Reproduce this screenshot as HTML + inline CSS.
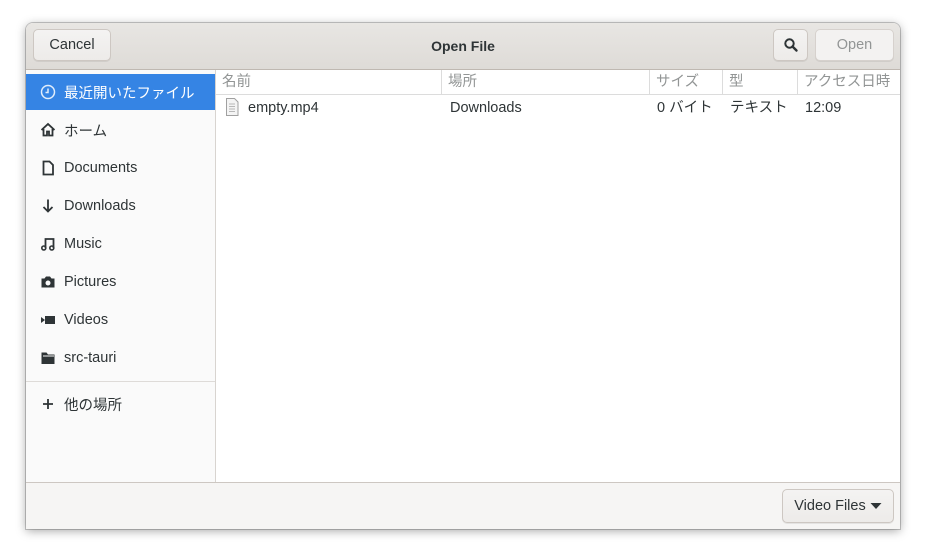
<!DOCTYPE html>
<html><head><meta charset="utf-8"><style>
body{margin:0;width:926px;height:558px;background:#fff;position:relative;font-family:"Liberation Sans","Noto Sans CJK JP",sans-serif;font-size:14.5px;color:#2e3436;overflow:hidden}
.win{position:absolute;left:26px;top:23px;width:874px;height:506px;background:#fff;border-radius:7px 7px 0 0;box-shadow:0 2px 10px rgba(0,0,0,.35),0 0 0 1px rgba(0,0,0,.2);overflow:hidden}
.hb{position:absolute;left:0;top:0;width:874px;height:46px;background:linear-gradient(#e8e6e3,#dedbd7);border-bottom:1px solid #bfb8b1}
.btn{position:absolute;top:6px;height:32px;border:1px solid #cdc7c2;border-radius:5px;background:linear-gradient(#f4f3f2,#edebe9);box-sizing:border-box;display:flex;align-items:center;justify-content:center;box-shadow:0 1px rgba(0,0,0,.07)}
.title{position:absolute;left:0;width:874px;top:15px;text-align:center;font-weight:bold;font-size:14px}
.side{position:absolute;left:0;top:47px;width:189px;height:412px;background:#fafafa;border-right:1px solid #d8d4d0}
.row{position:absolute;left:0;width:189px;height:36px;display:flex;align-items:center}
.row svg{position:absolute;left:14px}
.row span{position:absolute;left:38px}
.sel{background:#3584e4;color:#fff}
.hdr{position:absolute;top:47px;height:24px;border-bottom:1px solid #dcdcdc;color:#929595;font-size:14.5px;line-height:24px;left:190px;width:684px}
.hdr div{position:absolute;top:0;height:24px;border-right:1px solid #dcdcdc;padding-left:6px;box-sizing:border-box}
.cell{position:absolute;top:76px;line-height:18px}
.bot{position:absolute;left:0;top:459px;width:874px;height:47px;background:#f6f5f4;border-top:1px solid #cdc7c2}
</style></head><body>
<div class="win">
 <div class="hb">
  <div class="btn" style="left:7px;width:78px">Cancel</div>
  <div class="title">Open File</div>
  <div class="btn" style="left:747px;width:35px"><svg width="16" height="16" viewBox="0 0 16 16"><circle cx="6.5" cy="6.5" r="4.2" fill="none" stroke="#2e3436" stroke-width="2"/><path d="M9.5 9.5L13.5 13.5" stroke="#2e3436" stroke-width="2.4" stroke-linecap="round"/></svg></div>
  <div class="btn" style="left:789px;width:79px;color:#929595;background:#f3f2f1;border-color:#d6d1cd">Open</div>
 </div>
 <div class="side">
  <div class="row sel" style="top:4px"><svg width="16" height="16" viewBox="0 0 16 16"><circle cx="8" cy="8" r="6.5" fill="none" stroke="#fff" stroke-width="1.5" opacity=".85"/><path d="M8 4.5V8.5H5.5" fill="none" stroke="#fff" stroke-width="1.5" opacity=".85"/></svg><span>最近開いたファイル</span></div>
  <div class="row" style="top:42px"><svg width="16" height="16" viewBox="0 0 16 16"><path d="M1.5 8L8 2l6.5 6M3.5 7v6.5h3.5v-4h2v4h3.5V7" fill="none" stroke="#2e3436" stroke-width="1.8"/></svg><span>ホーム</span></div>
  <div class="row" style="top:80px"><svg width="16" height="16" viewBox="0 0 16 16"><path d="M3.5 1.5h6l3.5 3.5v9.5h-9.5z" fill="none" stroke="#2e3436" stroke-width="1.8"/></svg><span>Documents</span></div>
  <div class="row" style="top:118px"><svg width="16" height="16" viewBox="0 0 16 16"><path d="M8 1.5v12M3.5 9l4.5 4.5 4.5-4.5" fill="none" stroke="#2e3436" stroke-width="1.8"/></svg><span>Downloads</span></div>
  <div class="row" style="top:156px"><svg width="16" height="16" viewBox="0 0 16 16"><path d="M5.5 12V3h8v9" fill="none" stroke="#2e3436" stroke-width="1.8"/><circle cx="3.8" cy="12" r="2" fill="none" stroke="#2e3436" stroke-width="1.6"/><circle cx="11.8" cy="12" r="2" fill="none" stroke="#2e3436" stroke-width="1.6"/></svg><span>Music</span></div>
  <div class="row" style="top:194px"><svg width="16" height="16" viewBox="0 0 16 16"><path d="M1.5 4.5h3l1.5-2h4l1.5 2h3v9h-13z" fill="#2e3436"/><circle cx="8" cy="9" r="2.5" fill="#fafafa"/></svg><span>Pictures</span></div>
  <div class="row" style="top:232px"><svg width="16" height="16" viewBox="0 0 16 16"><rect x="5" y="4" width="10" height="8" fill="#2e3436"/><path d="M1 5v6l4-3z" fill="#2e3436"/></svg><span>Videos</span></div>
  <div class="row" style="top:270px"><svg width="16" height="16" viewBox="0 0 16 16"><path d="M1.5 2.5h5l1.5 2h6.5v9.5h-13z" fill="#2e3436"/><path d="M3 6h11" stroke="#fafafa" stroke-width="1"/></svg><span>src-tauri</span></div>
  <div style="position:absolute;left:0;top:311px;width:189px;height:1px;background:#dedbd8"></div>
  <div class="row" style="top:316px"><svg width="16" height="16" viewBox="0 0 16 16"><path d="M8 3v10M3 8h10" stroke="#2e3436" stroke-width="1.8"/></svg><span>他の場所</span></div>
 </div>
 <div class="hdr">
  <div style="left:0;width:226px">名前</div>
  <div style="left:226px;width:208px">場所</div>
  <div style="left:434px;width:73px">サイズ</div>
  <div style="left:507px;width:75px">型</div>
  <div style="left:582px;width:102px;border-right:none">アクセス日時</div>
 </div>
 <svg style="position:absolute;left:198px;top:75px" width="16" height="18" viewBox="0 0 16 18"><path d="M2.5 0.5h8l3.5 3.5v13.5h-11.5z" fill="#f4f4f4" stroke="#a0a0a0"/><path d="M5 6h6M5 8.5h6M5 11h6M5 13.5h6" stroke="#b8b8b8"/></svg>
 <div class="cell" style="left:222px">empty.mp4</div>
 <div class="cell" style="left:424px">Downloads</div>
 <div class="cell" style="left:631px">0 バイト</div>
 <div class="cell" style="left:704px">テキスト</div>
 <div class="cell" style="left:779px">12:09</div>
 <div class="bot">
  <div class="btn" style="left:756px;top:6px;width:112px;height:34px">Video Files&nbsp;<svg width="12" height="8" viewBox="0 0 12 8"><path d="M0.5 1h11L6 7z" fill="#2e3436"/></svg></div>
 </div>
</div>
</body></html>
